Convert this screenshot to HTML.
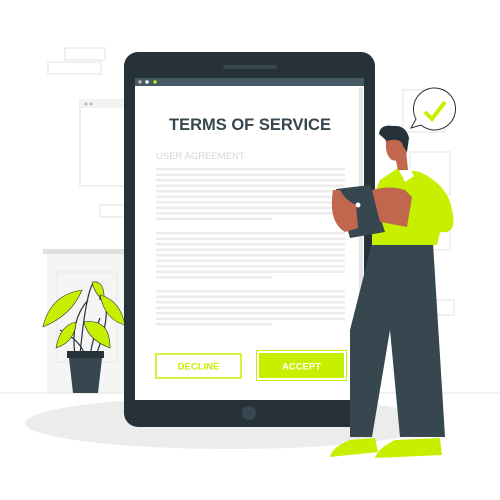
<!DOCTYPE html>
<html><head><style>body{margin:0;background:#fff}svg{display:block}</style></head><body>
<svg width="500" height="500" viewBox="0 0 500 500" xmlns="http://www.w3.org/2000/svg" font-family="Liberation Sans, sans-serif">
<g fill="none" stroke="#f0f0f0" stroke-width="2">
<rect x="48" y="62" width="53" height="12"/><rect x="65" y="48" width="40" height="12"/>
<rect x="80" y="100" width="48" height="86"/><rect x="100" y="205" width="26" height="12"/>
<rect x="403" y="90" width="42" height="42"/><rect x="410" y="152" width="40" height="42"/><rect x="410" y="210" width="40" height="40"/>
<rect x="420" y="300" width="34" height="15"/>
</g>
<rect x="80" y="100" width="48" height="8" fill="#f2f2f2"/>
<circle cx="86" cy="104" r="1.5" fill="#bbb"/><circle cx="91" cy="104" r="1.5" fill="#bbb"/>
<rect x="43" y="249" width="85" height="5" fill="#e0e0e0"/>
<rect x="47" y="254" width="78" height="140" fill="#f5f5f5"/>
<rect x="57" y="272" width="60" height="90" fill="none" stroke="#e6e6e6"/>
<line x1="0" y1="393" x2="500" y2="393" stroke="#e6e6e6"/>
<ellipse cx="230" cy="423" rx="205" ry="26" fill="#ececec"/>
<g stroke="#263238" stroke-width="1.2" fill="none">
<path d="M75 355 Q70 320 88 300 M80 355 Q85 300 92 285 Q100 275 100 300 M90 355 Q95 330 100 318 M96 355 Q110 320 105 300 M85 355 Q80 340 60 330"/>
</g>
<g fill="#c7f000" stroke="#263238" stroke-width="0.6">
<path d="M43 327 Q50 295 82 290 Q72 315 43 327Z"/>
<path d="M92 282 Q105 280 104 300 Q95 295 92 282Z"/>
<path d="M100 295 Q120 300 125 325 Q105 320 100 295Z"/>
<path d="M84 322 Q110 318 110 348 Q88 340 84 322Z"/>
<path d="M56 348 Q60 325 76 322 Q75 342 56 348Z"/>
</g>
<path d="M67 351 H104 V358 H67Z" fill="#263238"/>
<path d="M69 358 H102 L98 393 H73Z" fill="#37474f"/>
<rect x="124" y="52" width="251" height="375" rx="14" fill="#263238"/>
<rect x="223" y="65" width="54" height="4" rx="2" fill="#37474f"/>
<rect x="135" y="78" width="229" height="322" fill="#fff"/>
<rect x="135" y="78" width="229" height="8" fill="#455a64"/>
<circle cx="140" cy="82" r="1.7" fill="#bbb"/><circle cx="147" cy="82" r="1.7" fill="#fff"/><circle cx="155" cy="82" r="1.7" fill="#c7f000"/>
<rect x="359" y="87" width="4" height="313" fill="#e6e6e6"/>
<circle cx="249" cy="413" r="7" fill="#37474f"/>
<text x="250" y="130" text-anchor="middle" font-size="16.5" font-weight="bold" fill="#37474f">TERMS OF SERVICE</text>
<text x="156" y="159" font-size="9.5" fill="#d6d6d6">USER AGREEMENT</text>
<g fill="#ececec">
<rect x="156" y="168" width="189" height="2.5"/><rect x="156" y="173.5" width="189" height="2.5"/><rect x="156" y="179" width="189" height="2.5"/><rect x="156" y="184.5" width="189" height="2.5"/><rect x="156" y="190" width="189" height="2.5"/><rect x="156" y="195.5" width="189" height="2.5"/><rect x="156" y="201" width="189" height="2.5"/><rect x="156" y="206.5" width="189" height="2.5"/><rect x="156" y="212" width="189" height="2.5"/><rect x="156" y="217.5" width="116" height="2.5"/>
<rect x="156" y="232" width="189" height="2.5"/><rect x="156" y="237.5" width="189" height="2.5"/><rect x="156" y="243" width="189" height="2.5"/><rect x="156" y="248.5" width="189" height="2.5"/><rect x="156" y="254" width="189" height="2.5"/><rect x="156" y="259.5" width="189" height="2.5"/><rect x="156" y="265" width="189" height="2.5"/><rect x="156" y="270.5" width="189" height="2.5"/><rect x="156" y="276" width="116" height="2.5"/>
<rect x="156" y="290" width="189" height="2.5"/><rect x="156" y="295.5" width="189" height="2.5"/><rect x="156" y="301" width="189" height="2.5"/><rect x="156" y="306.5" width="189" height="2.5"/><rect x="156" y="312" width="189" height="2.5"/><rect x="156" y="317.5" width="189" height="2.5"/><rect x="156" y="323" width="116" height="2.5"/>
</g>
<rect x="156" y="354" width="85" height="24" fill="#fff" stroke="#c7f000" stroke-width="1.5"/>
<text x="198.5" y="369.5" text-anchor="middle" font-size="9.5" font-weight="bold" fill="#c7f000">DECLINE</text>
<rect x="256.5" y="350.5" width="90" height="30" fill="none" stroke="#c7f000" stroke-width="1"/>
<rect x="259" y="353" width="85" height="25" fill="#c7f000"/>
<text x="301.5" y="369.5" text-anchor="middle" font-size="9.5" font-weight="bold" fill="#fff">ACCEPT</text>
<path d="M433 88 a21 21 0 1 1 -12 37 l-10 3 5 -9 a21 21 0 0 1 17 -31z" fill="#fff" stroke="#263238" stroke-width="1"/>
<path d="M425 112 l7 7 13 -17" stroke="#c7f000" stroke-width="4" fill="none"/>
<!-- person -->
<path d="M372 243 L433 243 L445 437 L400 437 L390 330 L372 437 L350 437 L350 330Z" fill="#37474f"/>
<path d="M350 440 L375 438 L378 452 L330 457 Q332 447 350 440Z" fill="#c7f000"/>
<path d="M395 440 L440 438 L442 455 L375 458 Q378 448 395 440Z" fill="#c7f000"/>
<path d="M398 168 L380 180 L372 200 L372 245 L437 245 L440 232 Q458 235 452 210 Q448 185 420 172Z" fill="#c7f000"/>
<path d="M398 168 L405 182 L414 176 L408 164Z" fill="#fff"/>
<path d="M394 152 L406 150 L408 170 L398 170Z" fill="#c1674e"/>
<path d="M384 135 Q395 125 405 135 L407 152 Q402 163 392 160 Q385 155 386 142Z" fill="#c1674e"/>
<path d="M379 134 Q380 124 393 126 Q406 125 409 138 L407 152 L403 146 Q401 137 387 141 Z" fill="#263238"/>
<path d="M336 189 L370 185 L385 232 L350 238Z" fill="#37474f"/>
<circle cx="358" cy="205" r="2.5" fill="#fff"/>
<path d="M333 190 Q328 222 345 232 L358 228 L356 205 Q345 200 340 190Z" fill="#c1674e"/>
<path d="M372 190 Q390 185 405 190 L412 197 L407 227 L380 222Z" fill="#c1674e"/>
<path d="M405 190 Q418 195 412 228 L436 232 L440 210 Z" fill="#c7f000"/>
</svg>
</body></html>
